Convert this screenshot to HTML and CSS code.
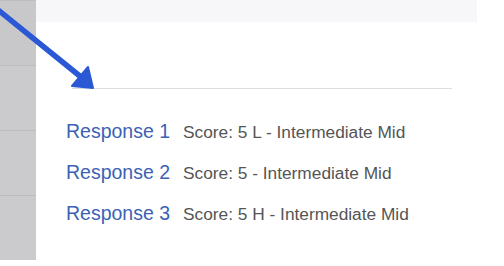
FILE: index.html
```html
<!DOCTYPE html>
<html lang="en">

<head>
    <meta charset="utf-8">
    <meta name="viewport" content="width=device-width, initial-scale=1.0">
    <title>Responses</title>

    <link rel="stylesheet" href="styles.css">
</head>

<body>

<div class="side">
    <div class="celle mork"></div>
    <div class="celle"></div>
    <div class="celle"></div>
    <div class="celle"></div>
</div>

<main class="indhold">
    <div class="topbar"></div>
    <hr class="streg">

    <section class="liste">
        <div class="svar">
            <a class="navn">Response 1</a>
            <span class="score">Score: 5 L - Intermediate Mid</span>
        </div>
        <div class="svar">
            <a class="navn">Response 2</a>
            <span class="score">Score: 5 - Intermediate Mid</span>
        </div>
        <div class="svar">
            <a class="navn">Response 3</a>
            <span class="score">Score: 5 H - Intermediate Mid</span>
        </div>
    </section>
</main>

<!-- pil tegnet ovenpaa -->
<svg class="pil" width="110" height="100" viewBox="0 0 110 100">
    <line x1="-3" y1="9" x2="81" y2="77" stroke="#2b58d4" stroke-width="5.5" stroke-linecap="round"/>
    <polygon points="93,88 72,86 88,67" fill="#2b58d4" stroke="#2b58d4" stroke-width="2" stroke-linejoin="round"/>
</svg>

</body>

</html>
```

FILE: styles.css
```css
body {
    margin: 0;
    display: flex;
    background: #fff;
    font-family: "Liberation Sans", Arial, sans-serif;
    position: relative;
    height: 266px;
    overflow: hidden;
}

.side {
    width: 36px;
    flex-shrink: 0;
}

.celle {
    height: 64px;
    border-top: 1px solid #bdbdbf;
    background: #cbcbcd;
}

.celle.mork {
    background: #c8c8ca;
}

.indhold {
    width: 441px;
}

.topbar {
    height: 22px;
    background: #f7f7f9;
}

.streg {
    border: none;
    border-top: 1px solid #dedede;
    margin: 66px 0 0 36px;
    width: 380px;
}

.liste {
    padding: 22px 0 0 30px;
}

.svar {
    display: flex;
    align-items: baseline;
    gap: 13px;
    line-height: 40px;
}

.navn {
    font-size: 19.5px;
    color: #3c62b6;
}

.score {
    font-size: 17.3px;
    color: #555;
}

.pil {
    position: absolute;
    top: 0;
    left: 0;
}
```
